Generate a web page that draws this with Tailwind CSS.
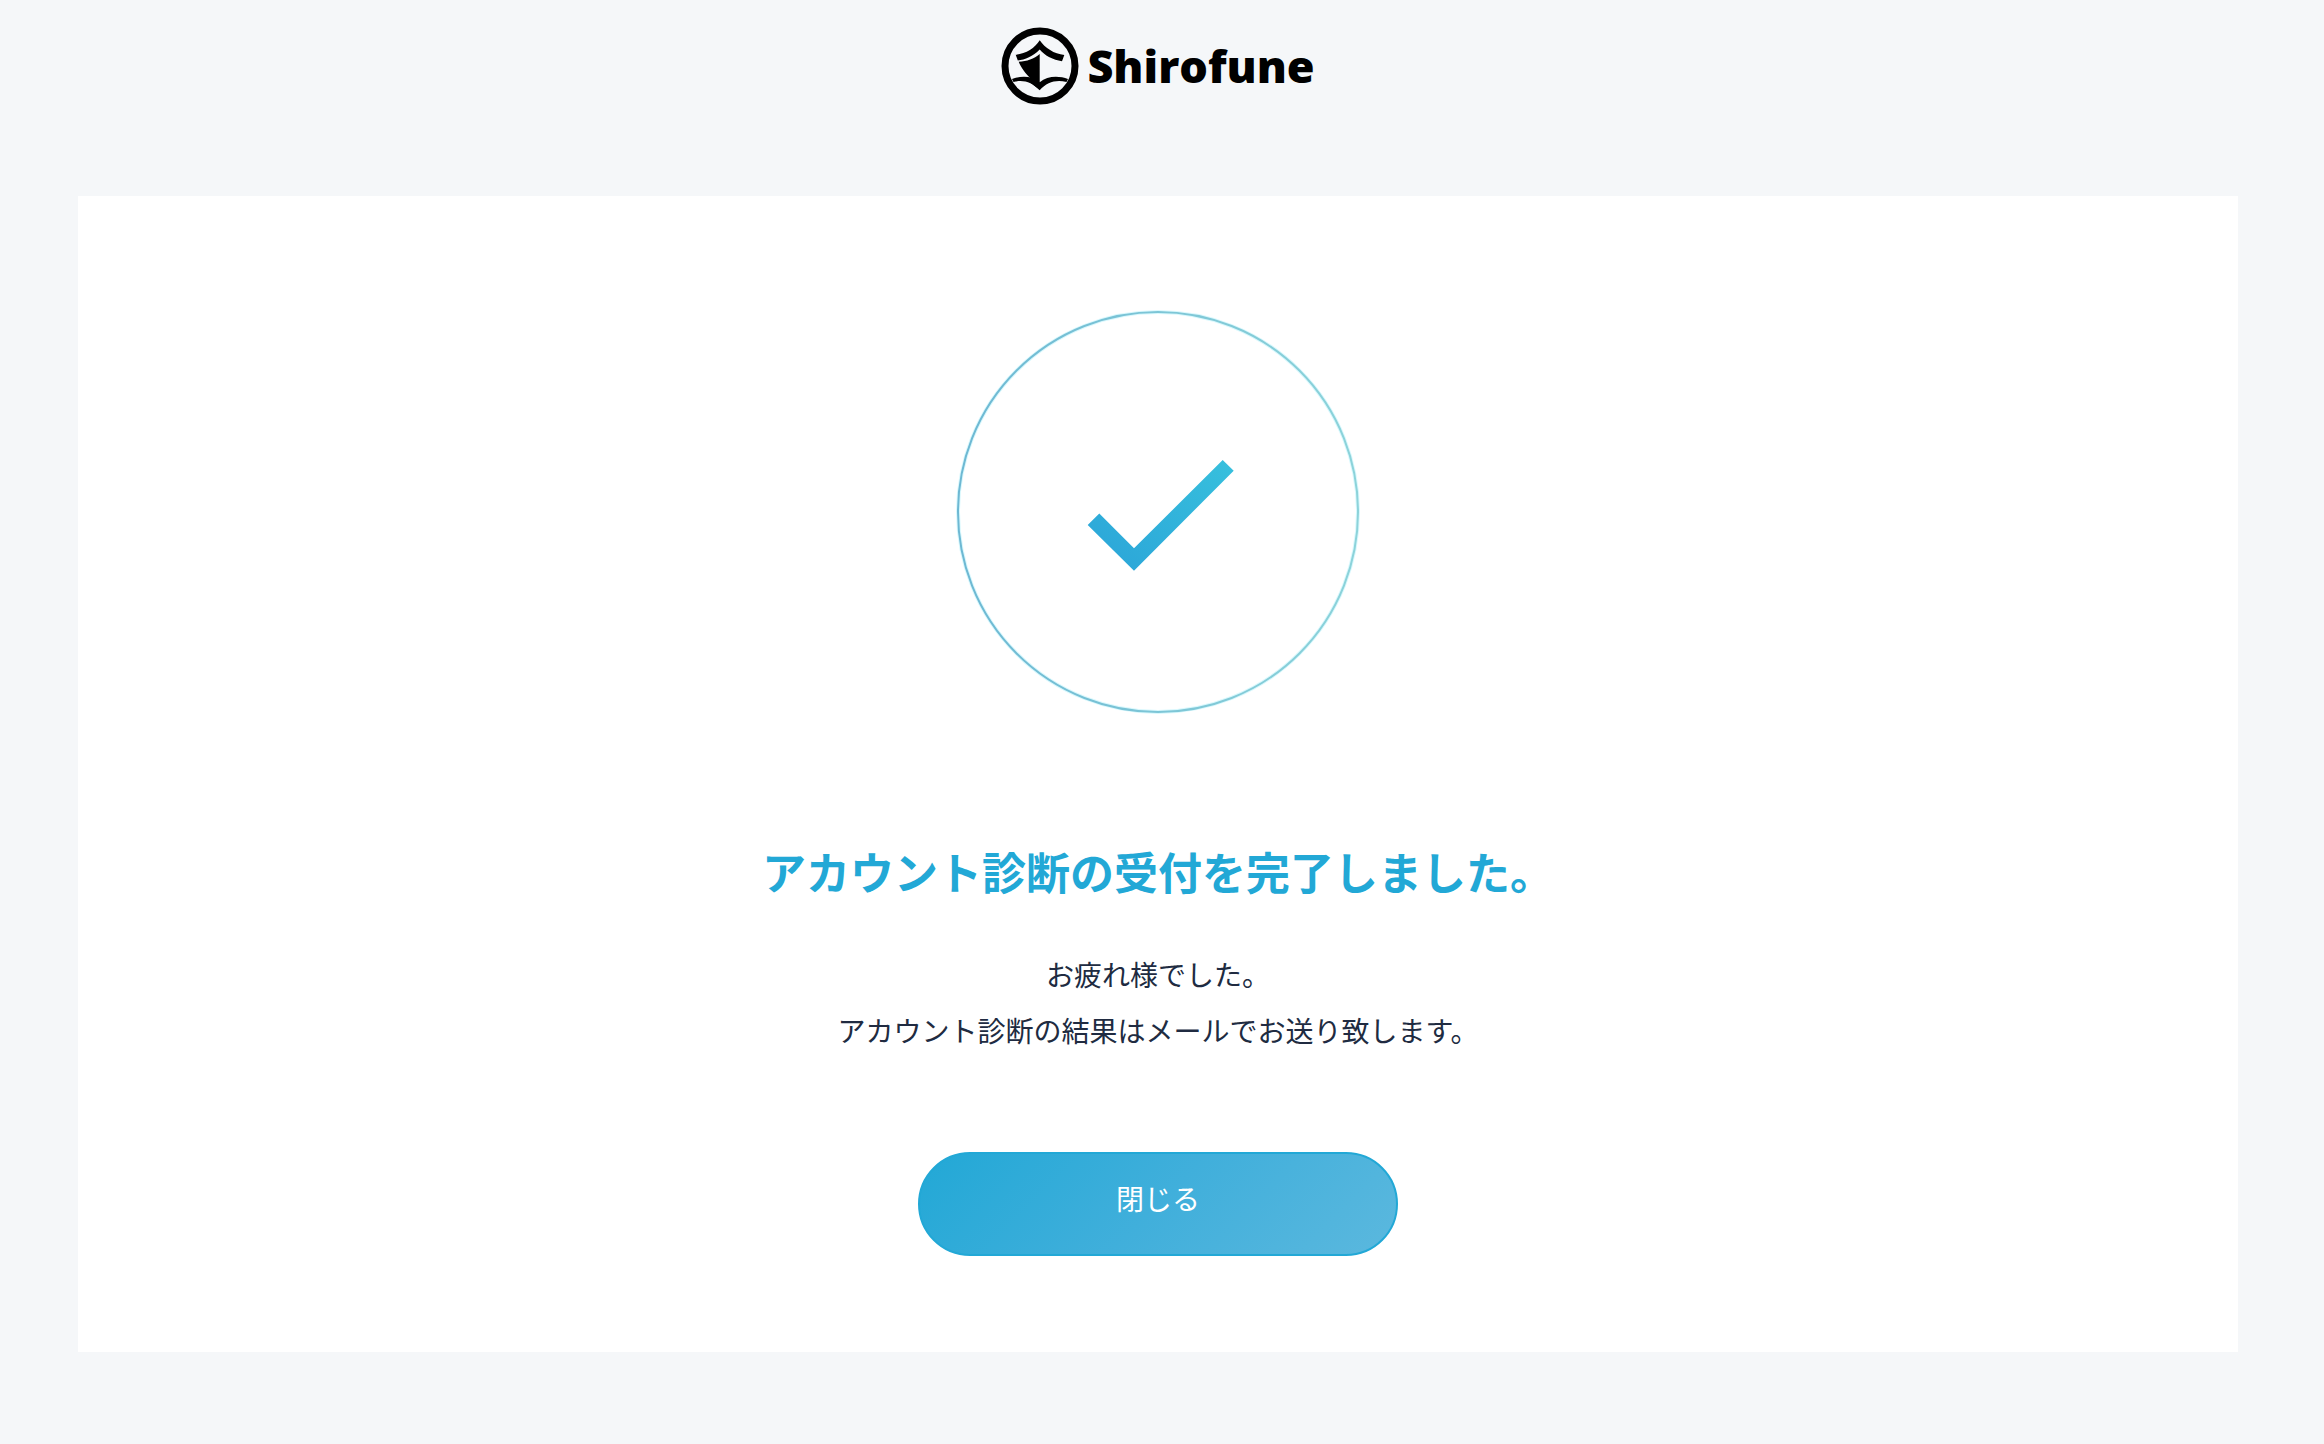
<!DOCTYPE html>
<html lang="ja">
<head>
    <meta charset="UTF-8">
    <meta name="viewport" content="width=device-width, initial-scale=1.0">
    <title>Shirofune</title>
    <script src="https://cdn.jsdelivr.net/npm/@tailwindcss/browser@4"></script>
</head>
<body class="min-h-screen bg-[#f5f7f9] pl-[78px] pr-[86px] pb-[92px] font-['Noto_Sans_CJK_JP',sans-serif] text-[#202b41]">
    <!-- Logo -->
    <header class="h-[196px] pt-[27px] flex justify-center items-start">
        <div class="flex items-start gap-2 text-black">
            <svg class="w-[78px] h-[78px]" viewBox="0 0 78 78" fill="currentColor" aria-hidden="true">
                <circle cx="39" cy="39" r="35" fill="none" stroke="currentColor" stroke-width="7" />
                <path d="M38.7 13.3C44 21 53 27 63.3 28L61 34.3C52 33 44 29 38.7 22.6C32 29.5 24 33 16.8 33.5L14.7 27.7C25 27 34 21 38.7 13.3Z" />
                <path d="M17.7 34.8C26 34.4 33 32 38.7 27V63L26 53L30 52C25 47 20 41 17.7 34.8Z" />
                <path d="M11 52C20 48.5 31 48.5 38.7 55.3C46.5 48.5 58 48.5 67 52L65.5 55C55 52.5 46 55 38.7 63.3C31 55 22 52.5 12.5 55Z" />
            </svg>
            <span class="font-['Open_Sans',sans-serif] text-[45px] leading-[78px] font-extrabold">Shirofune</span>
        </div>
    </header>

    <!-- Completion card -->
    <main class="bg-white pt-[114px] pb-24 flex flex-col items-center text-center">
        <svg class="w-[404px] h-[404px]" viewBox="0 0 404 404" fill="none" aria-hidden="true">
            <defs>
                <linearGradient id="ring" x1="0" y1="0" x2="1" y2="0">
                    <stop offset="0" stop-color="#6db8d3" />
                    <stop offset="1" stop-color="#8cd3da" />
                </linearGradient>
                <linearGradient id="check" x1="0" y1="1" x2="1" y2="0">
                    <stop offset="0" stop-color="#2ba4d8" />
                    <stop offset="1" stop-color="#37c0dd" />
                </linearGradient>
            </defs>
            <circle cx="202" cy="202" r="200" stroke="#d9f8fd" stroke-width="4" />
            <circle cx="202" cy="202" r="200" stroke="url(#ring)" stroke-width="2" />
            <path d="M131.7 215L143.3 203.5L178 238.3L266.7 150L277.7 160.7L178 260.7Z" fill="url(#check)" />
        </svg>

        <h1 class="mt-[124px] text-[44px] leading-[66px] font-bold text-[#22a8d6]">アカウント診断の受付を完了しました。</h1>

        <p class="mt-[42px] text-[28px] leading-[56px]">
            お疲れ様でした。<br>
            アカウント診断の結果はメールでお送り致します。
        </p>

        <button type="button" class="mt-[94px] w-[480px] h-[104px] pb-3 rounded-full border-2 border-[#22a8d6] bg-linear-[135deg,#22a8d6,#40afdb_50%,#5bb8de] text-[28px] text-white cursor-pointer">
            閉じる
        </button>
    </main>
</body>
</html>
